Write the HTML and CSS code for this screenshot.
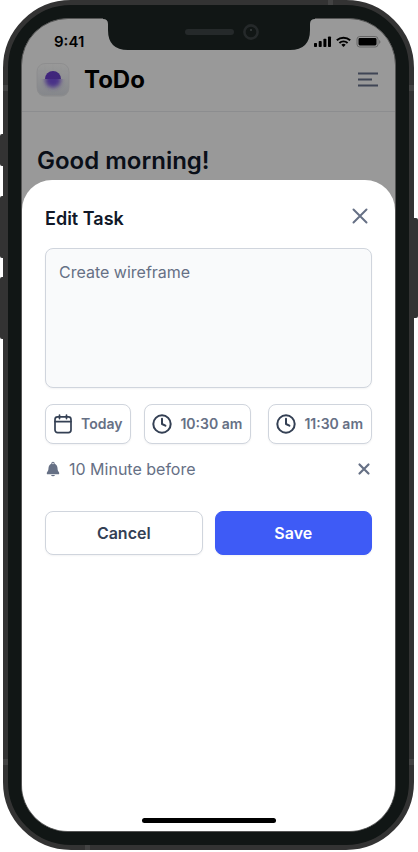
FILE: index.html
```html
<!DOCTYPE html>
<html lang="en">
<head>
<meta charset="utf-8">
<meta name="viewport" content="width=device-width, initial-scale=1">
<title>ToDo</title>
<link rel="stylesheet" href="styles.css">
</head>
<body>
<div class="phone">
  <span class="key key-mute"></span>
  <span class="key key-up"></span>
  <span class="key key-down"></span>
  <span class="key key-power"></span>
  <span class="band band-top"></span>
  <span class="band band-bottom"></span>
  <span class="band band-left-high"></span>
  <span class="band band-right-high"></span>
  <span class="band band-left-low"></span>
  <span class="band band-right-low"></span>
  <svg class="notch" width="212" height="33" viewBox="0 0 212 33" aria-hidden="true">
    <path fill="#111615" d="M0 0H212V1Q207 1 207 6V12Q207 32 187 32H25Q5 32 5 12V6Q5 1 0 1Z"/>
    <rect x="82" y="11" width="49" height="6" rx="3" fill="#25292a"/>
    <circle cx="148" cy="14" r="6.6" fill="#111615" stroke="#25292a" stroke-width="2.6"/>
    <circle cx="148" cy="12" r="1" fill="#3b4041"/>
  </svg>
  <div class="screen">
    <div class="status">
      <span class="clock">9:41</span>
      <svg class="signals" width="68" height="12" viewBox="0 0 68 12" aria-hidden="true">
        <g fill="#000">
          <rect x="1" y="7" width="3" height="4" rx=".8"/>
          <rect x="5.7" y="5" width="3" height="6" rx=".8"/>
          <rect x="10.4" y="2.8" width="3" height="8.2" rx=".8"/>
          <rect x="15" y=".4" width="3" height="10.6" rx=".8"/>
        </g>
        <g fill="none" stroke="#000" stroke-width="2">
          <path d="M23.8 4.2A10.2 10.2 0 0 1 37.2 4.2"/>
          <path d="M26.4 6.9A6.3 6.3 0 0 1 34.6 6.9"/>
        </g>
        <path fill="#000" d="M28.3 8.8A3.3 3.3 0 0 1 32.7 8.8L30.5 11.1Z"/>
        <rect x="44" y=".5" width="21" height="10.5" rx="2.8" fill="none" stroke="#666"/>
        <rect x="45.5" y="2" width="18" height="7.5" rx="1.4" fill="#000"/>
        <path fill="#666" d="M66.2 4V7.8Q67.4 7.2 67.4 5.9T66.2 4Z"/>
      </svg>
    </div>
    <header class="header">
      <svg class="logo" width="34" height="36" viewBox="0 0 34 36" aria-hidden="true">
        <defs>
          <linearGradient id="tile" x2="0" y2="1"><stop offset="0" stop-color="#999"/><stop offset="1" stop-color="#85878b"/></linearGradient>
          <linearGradient id="dome" x2="1" y2="0"><stop offset="0" stop-color="#41247d"/><stop offset="1" stop-color="#3f287a"/></linearGradient>
          <filter id="soft" x="-50%" y="-50%" width="200%" height="200%"><feGaussianBlur stdDeviation="2"/></filter>
          <clipPath id="lower"><path d="M1 17H33V33H1Z"/></clipPath>
        </defs>
        <rect x="1" y="2.5" width="32" height="32" rx="8" fill="#858689" opacity=".7"/>
        <rect x="1" y="1.5" width="32" height="32" rx="8" fill="url(#tile)" stroke="#8c8c8d" stroke-width=".8"/>
        <path d="M9 2V17M17 2V17M25 2V17M1 9H33M1 25H33" stroke="#8e8e90" stroke-width=".4" opacity=".5"/>
        <g clip-path="url(#lower)"><circle cx="17" cy="17.5" r="8" fill="#4a3188" filter="url(#soft)"/></g>
        <path d="M9 17A8 8 0 0 1 25 17Z" fill="url(#dome)"/>
      </svg>
      <span class="brand">ToDo</span>
      <button class="icon-button" type="button" aria-label="Menu">
        <svg width="20" height="16" viewBox="0 0 20 16"><path d="M0 1.5H20M0 7.5H14M0 13.5H20" stroke="#3f4555" stroke-width="2"/></svg>
      </button>
    </header>
    <h1 class="greeting">Good morning!</h1>
    <form class="sheet">
      <div class="sheet-head">
        <h2 class="title"><label for="task">Edit Task</label></h2>
        <button class="icon-button" type="button" aria-label="Close">
          <svg width="24" height="24" viewBox="0 0 24 24"><path d="M5.5 5.5L18.5 18.5M18.5 5.5L5.5 18.5" stroke="#667085" stroke-width="2" stroke-linecap="round"/></svg>
        </button>
      </div>
      <textarea class="task" id="task">Create wireframe</textarea>
      <div class="chips">
        <div class="chip-pair">
          <button class="chip" type="button">
            <svg width="20" height="20" viewBox="0 0 20 20" fill="none" stroke="#344054" stroke-width="1.7" stroke-linecap="round" stroke-linejoin="round"><rect x="2" y="2.8" width="16" height="15.8" rx="2.6"/><path d="M2 7.6H18M6.5 1V4.6M13.5 1V4.6"/></svg>
            Today
          </button>
          <button class="chip" type="button">
            <svg width="20" height="20" viewBox="0 0 20 20" fill="none" stroke="#344054" stroke-width="2" stroke-linecap="round" stroke-linejoin="round"><circle cx="10" cy="10" r="8.7"/><path d="M10 4.8V10L13.4 11.7"/></svg>
            10:30 am
          </button>
        </div>
        <button class="chip" type="button">
          <svg width="20" height="20" viewBox="0 0 20 20" fill="none" stroke="#344054" stroke-width="2" stroke-linecap="round" stroke-linejoin="round"><circle cx="10" cy="10" r="8.7"/><path d="M10 4.8V10L13.4 11.7"/></svg>
          11:30 am
        </button>
      </div>
      <div class="reminder">
        <svg width="16" height="16" viewBox="0 0 16 16" aria-hidden="true"><path fill="#667085" d="M8 .8A1.8 1.8 0 0 0 6.3 2.7C4.5 3.4 3.6 5 3.5 7C3.4 9.1 3 10.1 2.2 11Q1.7 11.6 1.8 12.7Q1.9 13.3 2.6 13.3H13.4Q14.1 13.3 14.2 12.7Q14.3 11.6 13.8 11C13 10.1 12.6 9.1 12.5 7C12.4 5 11.5 3.4 9.7 2.7A1.8 1.8 0 0 0 8 .8ZM6 14A2.1 1.7 0 0 0 10 14Z"/><circle cx="8" cy="2.5" r=".7" fill="#fff"/></svg>
        <span>10 Minute before</span>
        <button class="icon-button" type="button" aria-label="Remove reminder">
          <svg width="16" height="16" viewBox="0 0 16 16"><path d="M3.5 3.5L12.5 12.5M12.5 3.5L3.5 12.5" stroke="#667085" stroke-width="2.2" stroke-linecap="round"/></svg>
        </button>
      </div>
      <div class="actions">
        <button class="button" type="button">Cancel</button>
        <button class="button button-primary" type="submit">Save</button>
      </div>
      <div class="home"></div>
    </form>
  </div>
</div>
</body>
</html>
```
FILE: styles.css
```css
* {
  box-sizing: border-box;
}

body {
  margin: 0;
  padding: 0 4px 2px 3px;
  background: #fff;
  color: #101828;
  font-family: Inter, "Liberation Sans", sans-serif;
}

button,
textarea {
  font: inherit;
}

.phone {
  position: relative;
  display: flex;
  min-height: calc(100vh - 2px);
  padding: 13px;
  border: 5px solid #333;
  border-radius: 68px;
  background: #111615;
}

/* Hardware keys and antenna bands sit on the frame */
.key,
.band {
  position: absolute;
}

.key {
  left: -8px;
  width: 4px;
  background: #333;
  border-radius: 2px 0 0 2px;
}

.key-mute {
  top: 129px;
  height: 32px;
}

.key-up {
  top: 191px;
  height: 62px;
}

.key-down {
  top: 272px;
  height: 62px;
}

.key-power {
  left: auto;
  right: -9px;
  top: 213px;
  height: 100px;
  border-radius: 0 2px 2px 0;
}

.band {
  width: 5px;
  height: 6px;
  background: #434343;
}

.band-top {
  top: -5px;
  right: 76px;
  height: 5px;
}

.band-bottom {
  bottom: -5px;
  left: 77px;
  height: 5px;
}

.band-left-high {
  top: 80px;
  left: -5px;
}

.band-right-high {
  top: 80px;
  right: -5px;
}

.band-left-low {
  bottom: 80px;
  left: -5px;
}

.band-right-low {
  bottom: 80px;
  right: -5px;
}

.notch {
  position: absolute;
  top: 13px;
  left: 50%;
  margin-left: -106px;
}

.screen {
  display: flex;
  flex: 1;
  flex-direction: column;
  overflow: hidden;
  border: 1px solid #555;
  border-radius: 47px;
  background: #999;
}

.status {
  display: flex;
  align-items: flex-end;
  justify-content: space-between;
  height: 32px;
  padding: 0 14px 0 32px;
}

.clock {
  font-size: 15px;
  font-weight: 600;
  line-height: 18px;
  color: #000;
}

.signals {
  margin-bottom: 3px;
}

.header {
  display: flex;
  align-items: center;
  height: 61px;
  padding: 0 17px 2px 14px;
  border-bottom: 1px solid #8c8d8f;
}

.brand {
  margin: 0 auto 0 14px;
  font-size: 24px;
  font-weight: 700;
  line-height: 32px;
  color: #000;
}

.icon-button {
  display: flex;
  padding: 0;
  border: 0;
  background: none;
}

.greeting {
  margin: 33px 15px 3px;
  font-size: 24px;
  font-weight: 600;
  line-height: 32px;
  color: #0a0f18;
}

.sheet {
  display: flex;
  flex: 1;
  flex-direction: column;
  padding: 24px 23px 8px;
  border-radius: 30px 30px 0 0;
  background: #fff;
}

.sheet-head {
  display: flex;
  align-items: flex-start;
  justify-content: space-between;
  height: 44px;
}

.title {
  margin: 0;
  font-size: 18px;
  font-weight: 600;
  line-height: 30px;
}

.task {
  width: 100%;
  height: 140px;
  padding: 11px 13px;
  border: 1px solid #d0d5dd;
  border-radius: 8px;
  background: #f9fafb;
  box-shadow: 0 1px 2px #1018280d;
  color: #667085;
  font-size: 16px;
  line-height: 24px;
  resize: none;
  outline: none;
}

.chips {
  display: flex;
  justify-content: space-between;
  margin-top: 16px;
}

.chip-pair {
  display: flex;
  gap: 13px;
}

.chip {
  display: flex;
  align-items: center;
  gap: 8px;
  height: 40px;
  padding: 0 8px 0 7px;
  border: 1px solid #d0d5dd;
  border-radius: 8px;
  background: #fff;
  box-shadow: 0 1px 2px #1018280d;
  color: #667085;
  font-size: 14px;
  font-weight: 600;
  line-height: 20px;
}

.reminder {
  display: flex;
  align-items: center;
  gap: 8px;
  margin-top: 13px;
  color: #667085;
  font-size: 16px;
  line-height: 24px;
}

.reminder .icon-button {
  margin-left: auto;
}

.actions {
  display: grid;
  grid-template-columns: 1fr 1fr;
  gap: 12px;
  margin-top: 30px;
}

.button {
  height: 44px;
  border: 1px solid #d0d5dd;
  border-radius: 8px;
  background: #fff;
  box-shadow: 0 1px 2px #1018280d;
  color: #344054;
  font-size: 16px;
  font-weight: 600;
}

.button-primary {
  border-color: #3e5bf6;
  background: #3e5bf6;
  color: #fff;
}

.home {
  width: 134px;
  height: 5px;
  margin: auto auto 0;
  border-radius: 3px;
  background: #000;
}
```
